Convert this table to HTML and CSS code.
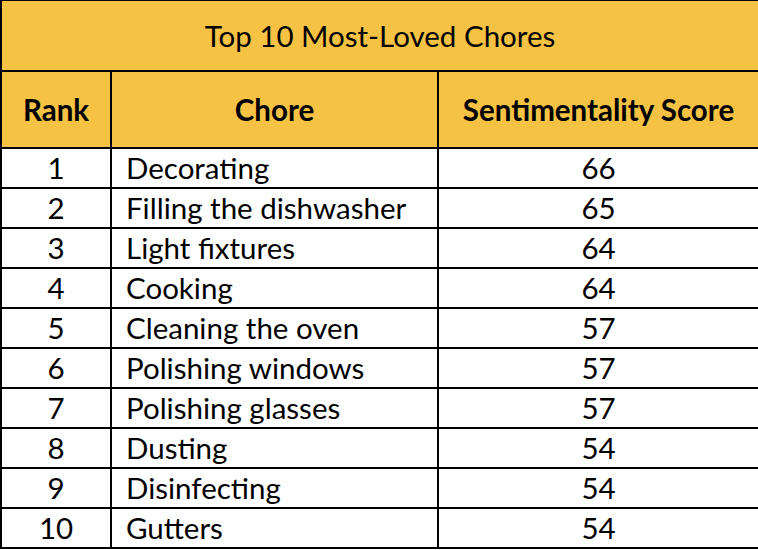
FILE: index.html
```html
<!DOCTYPE html>
<html lang="en">
<head>
<meta charset="utf-8">
<title>Top 10 Most-Loved Chores</title>
<link rel="stylesheet" href="styles.css">
</head>
<body>
<table class="chores">
  <colgroup>
    <col class="col-rank">
    <col class="col-chore">
    <col class="col-score">
  </colgroup>
  <thead>
    <tr class="title-row"><th colspan="3">Top 10 Most-Loved Chores</th></tr>
    <tr class="head-row"><th>Rank</th><th>Chore</th><th>Sentimentality Score</th></tr>
  </thead>
  <tbody>
    <tr><td class="rank">1</td><td class="chore">Decorating</td><td class="score">66</td></tr>
    <tr><td class="rank">2</td><td class="chore">Filling the dishwasher</td><td class="score">65</td></tr>
    <tr><td class="rank">3</td><td class="chore">Light fixtures</td><td class="score">64</td></tr>
    <tr><td class="rank">4</td><td class="chore">Cooking</td><td class="score">64</td></tr>
    <tr><td class="rank">5</td><td class="chore">Cleaning the oven</td><td class="score">57</td></tr>
    <tr><td class="rank">6</td><td class="chore">Polishing windows</td><td class="score">57</td></tr>
    <tr><td class="rank">7</td><td class="chore">Polishing glasses</td><td class="score">57</td></tr>
    <tr><td class="rank">8</td><td class="chore">Dusting</td><td class="score">54</td></tr>
    <tr><td class="rank">9</td><td class="chore">Disinfecting</td><td class="score">54</td></tr>
    <tr><td class="rank">10</td><td class="chore">Gutters</td><td class="score">54</td></tr>
  </tbody>
</table>
</body>
</html>
```
FILE: styles.css
```css
html, body {
  margin: 0;
  padding: 0;
  background: #ffffff;
}
body {
  font-family: "Lato", "Open Sans", "Liberation Sans", sans-serif;
  color: #000000;
}
.chores {
  border-collapse: collapse;
  table-layout: fixed;
  width: 758px;
  margin-top: -1px;
}
.col-rank { width: 110px; }
.col-chore { width: 327px; }
.col-score { width: 321px; }
.chores th,
.chores td {
  border: 2px solid #000000;
  padding: 0;
  overflow: hidden;
  white-space: nowrap;
}
.title-row th {
  background: #F5C243;
  height: 69px;
  font-weight: 400;
  font-size: 29.5px;
  text-align: center;
  vertical-align: middle;
}
.head-row th {
  background: #F5C243;
  height: 75px;
  font-weight: 700;
  font-size: 29.5px;
  text-align: center;
  vertical-align: middle;
}
.chores td {
  height: 38px;
  font-size: 29.5px;
  line-height: 36px;
  vertical-align: middle;
}
.chores td.rank,
.chores td.score { text-align: center; }
.chores td.chore { text-align: left; padding-left: 14px; }
```
